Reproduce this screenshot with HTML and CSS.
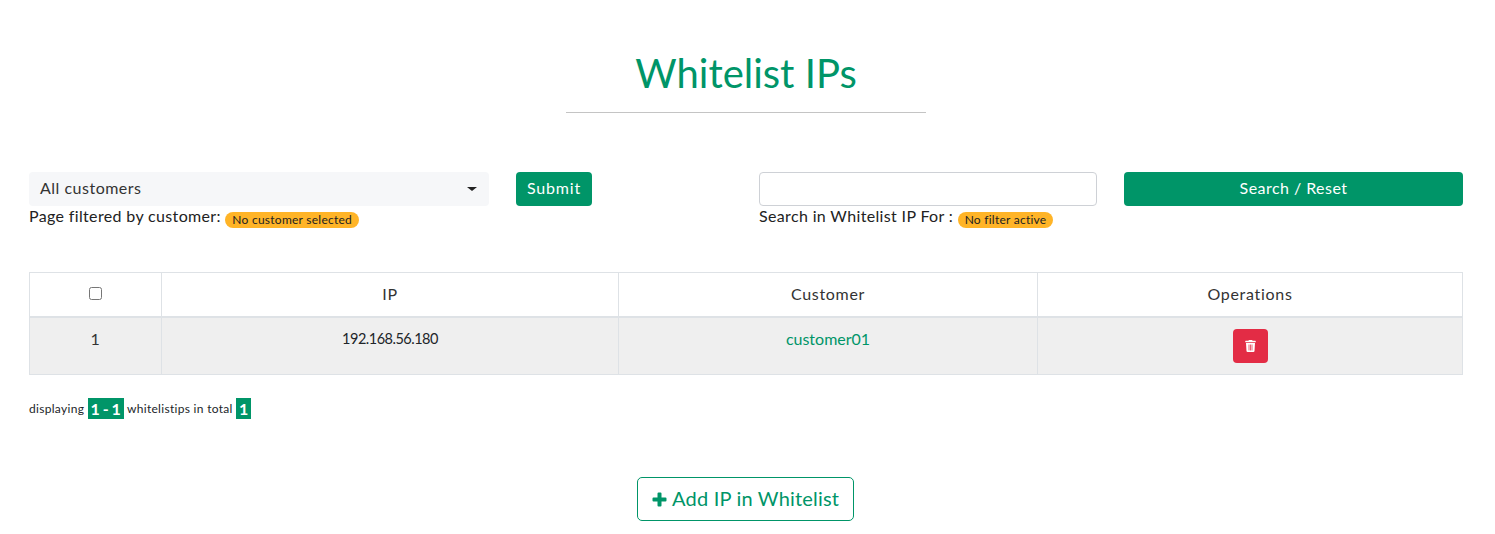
FILE: index.html
```html
<!DOCTYPE html>
<html lang="en">
  <head>
    <meta charset="UTF-8" />
    <title>Whitelist IPs</title>
    <link rel="stylesheet" href="styles.css">
  </head>
  <body>
    <div class="page-title">
      <h1>Whitelist IPs</h1>
      <hr />
    </div>

    <!-- filters -->
    <div class="filters">
      <div>
        <div class="select-box">
          <span>All customers</span>
          <span class="caret"></span>
        </div>
        <p class="filter-note">Page filtered by customer: <span class="pill">No customer selected</span></p>
      </div>
      <button class="btn">Submit</button>
      <div class="filter-search">
        <input type="text" class="search-input" />
        <p class="filter-note">Search in Whitelist IP For : <span class="pill">No filter active</span></p>
      </div>
      <button class="btn btn-search">Search / Reset</button>
    </div>

    <table class="ip-table">
      <thead>
        <tr>
          <th class="col-check"><input type="checkbox" /></th>
          <th class="col-ip">IP</th>
          <th class="col-customer">Customer</th>
          <th>Operations</th>
        </tr>
      </thead>
      <tbody>
        <tr>
          <td>1</td>
          <td class="ip-addr">192.168.56.180</td>
          <td><a href="#">customer01</a></td>
          <td class="cell-ops">
            <button class="btn-delete">
              <svg width="11" height="12" viewBox="0 0 448 512" fill="#fff">
                <path d="M432 32H312l-9.400-18.700A24 24 0 0 0 281.100 0H166.800a23.700 23.700 0 0 0-21.400 13.300L136 32H16A16 16 0 0 0 0 48v32a16 16 0 0 0 16 16h416a16 16 0 0 0 16-16V48a16 16 0 0 0-16-16z"/>
                <path fill-rule="evenodd" d="M53.200 467a48 48 0 0 0 47.900 45h245.800a48 48 0 0 0 47.900-45L416 128H32zM144 192h32v256h-32zM208 192h32v256h-32zM272 192h32v256h-32z"/>
              </svg>
            </button>
          </td>
        </tr>
      </tbody>
    </table>

    <p class="summary">displaying <span class="count">1 - 1</span> whitelistips in total <span class="count">1</span></p>

    <div class="add-row">
      <a href="#" class="btn-add">
        <svg width="15" height="15" viewBox="0 0 15 15" fill="#009568"><path d="M5.500 1.500a1 1 0 0 1 1-1h2a1 1 0 0 1 1 1v4h4a1 1 0 0 1 1 1v2a1 1 0 0 1-1 1h-4v4a1 1 0 0 1-1 1h-2a1 1 0 0 1-1-1v-4h-4a1 1 0 0 1-1-1v-2a1 1 0 0 1 1-1h4z"/></svg>
        <span>Add IP in Whitelist</span>
      </a>
    </div>
  </body>
</html>
```

FILE: styles.css
```css
* {
  box-sizing: border-box;
}
body {
  font-family: "Lato", "Open Sans", sans-serif;
  margin: 0;
  padding: 0 32px 0 29px;
  background-color: #fff;
  color: #212529;
  font-size: 16px;
}
.page-title {
  padding-top: 48px;
  text-align: center;
}
.page-title h1 {
  margin: 0;
  font-size: 40px;
  line-height: 50px;
  font-weight: 400;
  color: #009568;
}
.page-title hr {
  width: 360px;
  margin: 14px auto 0;
  border: none;
  border-top: 1px solid #c4c4c4;
}
.filters {
  display: grid;
  grid-template-columns: 460px 76px 478px 339px;
  column-gap: 27px;
  margin-top: 59px;
  align-items: start;
}
.filter-search {
  margin-left: 140px;
}
.select-box {
  display: flex;
  justify-content: space-between;
  align-items: center;
  height: 34px;
  padding: 0 12px 3px 11px;
  background-color: #f6f7f9;
  border-radius: 4px;
  color: #333;
  letter-spacing: 0.5px;
}
.caret {
  margin-top: 3px;
  border-top: 4px solid #222;
  border-left: 5px solid transparent;
  border-right: 5px solid transparent;
}
.search-input {
  display: block;
  width: 338px;
  height: 34px;
  border: 1px solid #ced1d6;
  border-radius: 4px;
  background-color: #fff;
}
.filter-note {
  margin: 0;
  line-height: 19px;
  color: #222;
  letter-spacing: 0.35px;
}
.pill {
  display: inline-block;
  padding: 0 7px;
  background-color: #ffb427;
  border-radius: 8px;
  font-size: 12px;
  line-height: 16px;
  letter-spacing: 0.25px;
  vertical-align: -2px;
}
.btn {
  height: 34px;
  padding: 0 0 3px;
  border: none;
  border-radius: 4px;
  background-color: #009568;
  color: #fff;
  font-family: inherit;
  font-size: 16px;
  letter-spacing: 0.8px;
}
.btn-search {
  letter-spacing: 0.45px;
}
.ip-table {
  width: 1434px;
  margin-top: 44px;
  border-collapse: collapse;
  table-layout: fixed;
  color: #333;
}
.ip-table th,
.ip-table td {
  border: 1px solid #dee2e6;
  text-align: center;
  font-weight: 400;
  letter-spacing: 0.7px;
}
.ip-table th {
  height: 44px;
  padding-bottom: 2px;
  border-bottom-width: 2px;
}
.ip-table th input {
  margin: 0;
  width: 13px;
  height: 13px;
}
.ip-table td {
  height: 58px;
  padding-top: 11px;
  vertical-align: top;
  background-color: #efefef;
}
.col-check {
  width: 132px;
}
.col-ip {
  width: 457px;
}
.col-customer {
  width: 419px;
}
.ip-table td.ip-addr {
  padding-top: 12px;
  font-size: 14.500px;
  letter-spacing: -0.5px;
  color: #212529;
}
.ip-table a {
  color: #009568;
  letter-spacing: 0;
  text-decoration: none;
}
.ip-table td.cell-ops {
  letter-spacing: 0;
}
.btn-delete {
  display: inline-flex;
  align-items: center;
  justify-content: center;
  width: 35px;
  height: 34px;
  padding: 0;
  border: none;
  border-radius: 4px;
  background-color: #e32c45;
}
.summary {
  margin: 23px 0 0;
  font-size: 12px;
  line-height: 21px;
  letter-spacing: 0.3px;
}
.count {
  display: inline-block;
  padding: 0 3px;
  background-color: #009568;
  color: #fff;
  font-size: 16px;
  font-weight: 700;
  line-height: 21px;
  letter-spacing: 0;
  word-spacing: -1px;
  vertical-align: top;
}
.add-row {
  margin-top: 58px;
  padding-right: 1px;
  display: flex;
  justify-content: center;
}
.btn-add {
  display: flex;
  align-items: center;
  gap: 5px;
  height: 44px;
  width: 217px;
  padding-left: 14px;
  border: 1px solid #009568;
  border-radius: 5px;
  color: #009568;
  font-size: 20px;
  text-decoration: none;
  letter-spacing: 0.2px;
}
.btn-add span {
  padding-bottom: 2px;
}
```
